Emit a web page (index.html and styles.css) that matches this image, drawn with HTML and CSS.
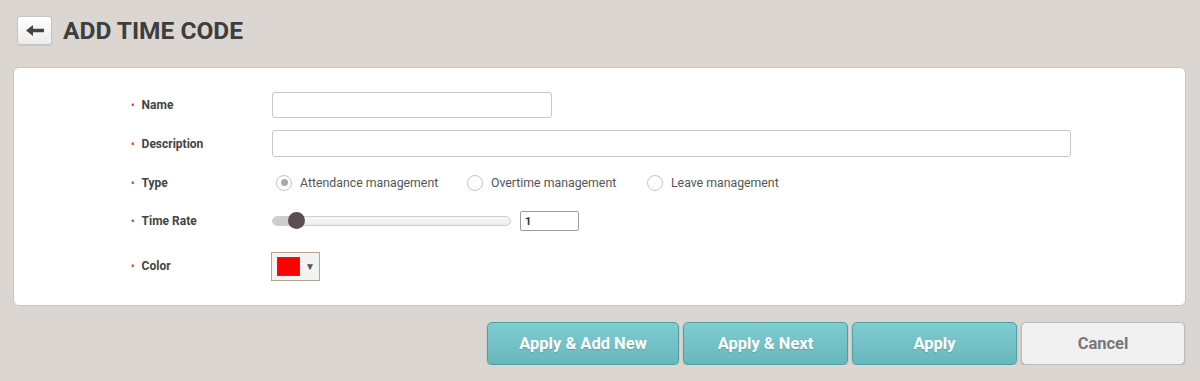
FILE: index.html
```html
<!DOCTYPE html>
<html lang="en">
<head>
  <meta charset="UTF-8" />
  <title>Add Time Code</title>
  <link rel="stylesheet" href="styles.css">
</head>
<body>
  <div class="header">
    <button class="back-btn">
      <svg width="20" height="13" viewBox="0 0 20 13"><path d="M1 6.5 L8 1 L8 4.8 L19 4.8 L19 8.2 L8 8.2 L8 12 Z" fill="#444"/></svg>
    </button>
    <h1>ADD TIME CODE</h1>
  </div>

  <div class="panel">
    <div class="form">
      <div class="label"><span class="req">•</span>Name</div>
      <div class="field"><input type="text" class="name-input" /></div>

      <div class="label"><span class="req">•</span>Description</div>
      <div class="field"><input type="text" class="desc-input" /></div>

      <div class="label"><span class="req">•</span>Type</div>
      <div class="field radios">
        <label class="radio"><span class="circle checked"></span>Attendance management</label>
        <label class="radio"><span class="circle"></span>Overtime management</label>
        <label class="radio"><span class="circle"></span>Leave management</label>
      </div>

      <div class="label"><span class="req">•</span>Time Rate</div>
      <div class="field rate">
        <div class="slider">
          <div class="slider-fill" style="width: 24px"></div>
          <div class="slider-thumb" style="left: 15px"></div>
        </div>
        <input type="text" class="rate-input" value="1" />
      </div>

      <div class="label"><span class="req">•</span>Color</div>
      <div class="field">
        <div class="color-picker">
          <span class="swatch"></span>
          <span class="caret">&#9660;</span>
        </div>
      </div>
    </div>
  </div>

  <div class="actions">
    <button class="btn btn-primary btn-wide">Apply &amp; Add New</button>
    <button class="btn btn-primary">Apply &amp; Next</button>
    <button class="btn btn-primary">Apply</button>
    <button class="btn btn-cancel">Cancel</button>
  </div>
</body>
</html>
```

FILE: styles.css
```css
body {
  margin: 0;
  background: #dcd6d2;
  font-family: Roboto, "Liberation Sans", sans-serif;
  color: #444;
}
.header {
  display: flex;
  align-items: center;
  gap: 11px;
  padding: 15px 0 0 17px;
  height: 30px;
}
.back-btn {
  width: 35px;
  height: 29px;
  padding: 0;
  border: 1px solid #c8c4c2;
  border-radius: 3px;
  background: linear-gradient(#ffffff, #ececec);
  display: flex;
  align-items: center;
  justify-content: center;
  box-shadow: 0 1px 1px rgba(0,0,0,0.08);
}
h1 {
  margin: 0;
  font-size: 24.5px;
  font-weight: 700;
  color: #3e3e3e;
}
.panel {
  margin: 22px 14px 0 13px;
  background: #fff;
  border: 1px solid #c9c5c3;
  border-radius: 6px;
  padding: 17px 0 12px 117px;
  height: 208px;
}
.form {
  display: grid;
  grid-template-columns: 141px 1fr;
  grid-template-rows: 39px 39px 39px 38px 52px;
  align-items: center;
}
.label {
  font-size: 12px;
  font-weight: 700;
  color: #444;
}
.req {
  color: #e8382c;
  font-size: 10px;
  margin-right: 7px;
}
.field {
  display: flex;
  align-items: center;
}
input[type="text"] {
  box-sizing: border-box;
  border: 1px solid #c6c6c6;
  border-radius: 3px;
  font-family: Roboto, "Liberation Sans", sans-serif;
  outline: none;
}
.name-input {
  width: 280px;
  height: 26px;
}
.desc-input {
  width: 799px;
  height: 27px;
}
.radio {
  display: flex;
  align-items: center;
  font-size: 12.3px;
  color: #555;
  margin-left: 4px;
}
.radio:nth-child(1) { width: 187px; }
.radio:nth-child(2) { width: 176px; }
.circle {
  width: 16px;
  height: 16px;
  box-sizing: border-box;
  border: 1px solid #c4c4c4;
  border-radius: 50%;
  margin-right: 8px;
  background: #fff;
  display: flex;
  align-items: center;
  justify-content: center;
}
.circle.checked::after {
  content: "";
  width: 7px;
  height: 7px;
  border-radius: 50%;
  background: #a9a9a9;
}
.rate {
  gap: 9px;
}
.slider {
  position: relative;
  width: 239px;
  height: 10px;
  box-sizing: border-box;
  border: 1px solid #cfcfcf;
  border-radius: 5px;
  background: linear-gradient(#f7f7f7, #ececec);
}
.slider-fill {
  height: 100%;
  border-radius: 5px 0 0 5px;
  background: #cdcdcd;
}
.slider-thumb {
  position: absolute;
  top: -5px;
  width: 17px;
  height: 17px;
  border-radius: 50%;
  background: #5a4e53;
}
.rate-input {
  width: 59px;
  height: 20px;
  border-color: #9c9c9c !important;
  border-radius: 2px !important;
  font-size: 11px;
  font-weight: 700;
  padding-left: 4px;
  color: #333;
}
.color-picker {
  box-sizing: border-box;
  width: 49px;
  height: 29px;
  margin-left: -1px;
  border: 1px solid #b5a597;
  background: #f3f3f3;
  display: flex;
  align-items: center;
  padding-left: 5px;
}
.swatch {
  box-sizing: border-box;
  width: 23px;
  height: 19px;
  background: #ff0000;
  border: 1px solid #555;
}
.caret {
  font-size: 10px;
  color: #555;
  margin-left: 5px;
}
.actions {
  display: flex;
  justify-content: flex-end;
  gap: 4px;
  margin: 16px 15px 0 0;
}
.btn {
  height: 43px;
  width: 165px;
  border-radius: 5px;
  font-family: Roboto, "Liberation Sans", sans-serif;
  font-size: 16.5px;
  font-weight: 700;
  box-shadow: 0 1px 2px rgba(0,0,0,0.2);
}
.btn-wide {
  width: 192px;
}
.btn-primary {
  color: #fff;
  background: linear-gradient(#7fcdd1, #68b7bd);
  border: 1px solid #4e9fa2;
  text-shadow: 0 1px 1px rgba(0,0,0,0.15);
}
.btn-cancel {
  width: 164px;
  color: #777;
  background: #f1f1f1;
  border: 1px solid #bdbdbd;
}
```
